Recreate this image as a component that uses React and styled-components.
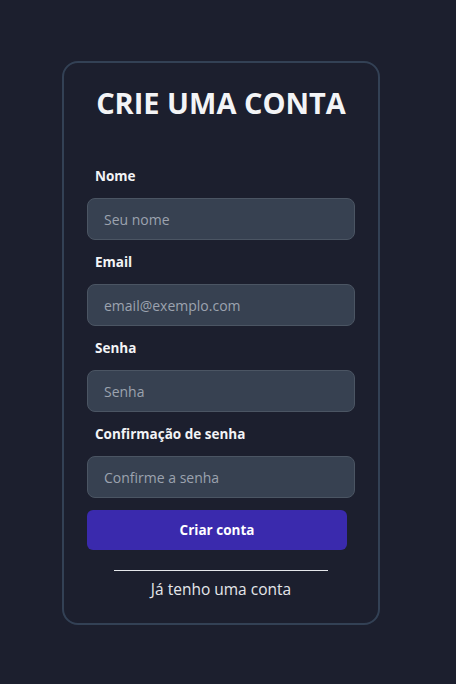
import React from "react";
import styled, { createGlobalStyle } from "styled-components";

const GlobalStyle = createGlobalStyle`
  html, body {
    margin: 0;
    padding: 0;
    background: #1c1f2e;
  }
  body {
    font-family: "Open Sans", "Noto Sans", sans-serif;
    color: #f3f4f6;
  }
`;

const Page = styled.div`
  min-height: 684px;
  padding: 61px 0 0 62px;
  box-sizing: border-box;
`;

const Card = styled.div`
  width: 318px;
  box-sizing: border-box;
  border: 2px solid #334155;
  border-radius: 16px;
  padding: 20px 23px 22px;
  display: flex;
  flex-direction: column;
`;

const Title = styled.h1`
  margin: 0;
  font-size: 29px;
  line-height: 40px;
  font-weight: 700;
  text-align: center;
  color: #f3f4f6;
`;

const Form = styled.form`
  margin-top: 43px;
  display: flex;
  flex-direction: column;
  gap: 12px;
`;

const Label = styled.label`
  padding-left: 8px;
  font-size: 13.5px;
  line-height: 20px;
  font-weight: 700;
  color: #f3f4f6;
`;

const Input = styled.input`
  height: 42px;
  box-sizing: border-box;
  width: 100%;
  padding: 0 16px;
  background: #374151;
  border: 1px solid #4b5563;
  border-radius: 8px;
  font-family: inherit;
  font-size: 14px;
  color: #f3f4f6;
  outline: none;

  &::placeholder {
    color: #9ca3af;
  }
`;

const Button = styled.button`
  width: calc(100% - 8px);
  height: 40px;
  border: none;
  border-radius: 6px;
  background: #3a2aad;
  color: #ffffff;
  font-family: inherit;
  font-size: 13.5px;
  font-weight: 700;
  cursor: pointer;
`;

const Divider = styled.hr`
  width: 80%;
  margin: 20px auto 0;
  border: none;
  border-top: 1px solid #e5e7eb;
`;

const LoginLink = styled.a`
  margin-top: 6px;
  text-align: center;
  font-size: 15.5px;
  line-height: 24px;
  color: #e5e7eb;
  text-decoration: none;
  cursor: pointer;
`;

const fields = [
  { id: "nome", label: "Nome", type: "text", placeholder: "Seu nome" },
  { id: "email", label: "Email", type: "email", placeholder: "email@exemplo.com" },
  { id: "senha", label: "Senha", type: "password", placeholder: "Senha" },
  { id: "confirma", label: "Confirmação de senha", type: "password", placeholder: "Confirme a senha" },
];

export default function App() {
  return (
    <>
      <GlobalStyle />
      <Page>
        <Card>
          <Title>CRIE UMA CONTA</Title>
          <Form onSubmit={(e) => e.preventDefault()}>
            {fields.map((f) => (
              <React.Fragment key={f.id}>
                <Label htmlFor={f.id}>{f.label}</Label>
                <Input id={f.id} type={f.type} placeholder={f.placeholder} />
              </React.Fragment>
            ))}
            <Button type="submit">Criar conta</Button>
          </Form>
          <Divider />
          <LoginLink>Já tenho uma conta</LoginLink>
        </Card>
      </Page>
    </>
  );
}
